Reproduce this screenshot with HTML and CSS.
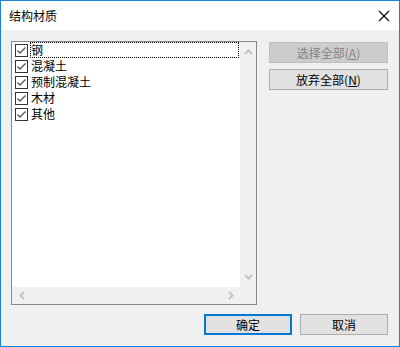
FILE: index.html
```html
<!DOCTYPE html>
<html>
<head>
<meta charset="utf-8">
<link rel="stylesheet" href="styles.css">
</head>
<body>
<div class="window">
  <div class="titlebar">
    <span class="title">结构材质</span>
    <svg class="close" width="12" height="12" viewBox="0 0 12 12"><path d="M1 1 L11 11 M11 1 L1 11" stroke="#000" stroke-width="1.1" fill="none"/></svg>
  </div>
  <div class="body">
    <div class="top">
      <div class="listbox">
        <div class="items">
          <div class="item focus"><span class="cb"><svg width="13" height="13" viewBox="0 0 13 13"><rect x="0.5" y="0.5" width="12" height="12" fill="#fff" stroke="#333"/><path d="M2.5 6.5 L5 9 L10.5 3.5" stroke="#555" stroke-width="1.3" fill="none"/></svg></span><span class="lbl">钢</span></div>
          <div class="item"><span class="cb"><svg width="13" height="13" viewBox="0 0 13 13"><rect x="0.5" y="0.5" width="12" height="12" fill="#fff" stroke="#333"/><path d="M2.5 6.5 L5 9 L10.5 3.5" stroke="#555" stroke-width="1.3" fill="none"/></svg></span><span class="lbl">混凝土</span></div>
          <div class="item"><span class="cb"><svg width="13" height="13" viewBox="0 0 13 13"><rect x="0.5" y="0.5" width="12" height="12" fill="#fff" stroke="#333"/><path d="M2.5 6.5 L5 9 L10.5 3.5" stroke="#555" stroke-width="1.3" fill="none"/></svg></span><span class="lbl">预制混凝土</span></div>
          <div class="item"><span class="cb"><svg width="13" height="13" viewBox="0 0 13 13"><rect x="0.5" y="0.5" width="12" height="12" fill="#fff" stroke="#333"/><path d="M2.5 6.5 L5 9 L10.5 3.5" stroke="#555" stroke-width="1.3" fill="none"/></svg></span><span class="lbl">木材</span></div>
          <div class="item"><span class="cb"><svg width="13" height="13" viewBox="0 0 13 13"><rect x="0.5" y="0.5" width="12" height="12" fill="#fff" stroke="#333"/><path d="M2.5 6.5 L5 9 L10.5 3.5" stroke="#555" stroke-width="1.3" fill="none"/></svg></span><span class="lbl">其他</span></div>
        </div>
        <div class="vscroll">
          <svg width="9" height="6" viewBox="0 0 9 6"><path d="M1 5 L4.5 1.5 L8 5" stroke="#c2c2c2" stroke-width="2" fill="none"/></svg>
          <svg width="9" height="6" viewBox="0 0 9 6"><path d="M1 1 L4.5 4.5 L8 1" stroke="#c2c2c2" stroke-width="2" fill="none"/></svg>
        </div>
        <div class="hscroll">
          <svg width="6" height="9" viewBox="0 0 6 9"><path d="M5 1 L1.5 4.5 L5 8" stroke="#c2c2c2" stroke-width="2" fill="none"/></svg>
          <svg width="6" height="9" viewBox="0 0 6 9"><path d="M1 1 L4.5 4.5 L1 8" stroke="#c2c2c2" stroke-width="2" fill="none"/></svg>
        </div>
        <div class="corner"></div>
      </div>
      <div class="side">
        <div class="btn disabled">选择全部(<u>A</u>)</div>
        <div class="btn">放弃全部(<u>N</u>)</div>
      </div>
    </div>
    <div class="bottom">
      <div class="btn default">确定</div>
      <div class="btn">取消</div>
    </div>
  </div>
</div>
</body>
</html>
```

FILE: styles.css
```css
* { box-sizing: border-box; }
html, body { margin: 0; padding: 0; }
body {
  width: 400px;
  height: 347px;
  font-family: "Noto Sans CJK SC", "Liberation Sans", sans-serif;
  font-size: 12px;
  color: #000;
}
.window {
  width: 400px;
  height: 347px;
  border: 1px solid #1883d7;
  display: flex;
  flex-direction: column;
  background: #f0f0f0;
}
.titlebar {
  height: 29px;
  background: #fff;
  display: flex;
  align-items: center;
  justify-content: space-between;
  padding: 0 9px 0 8px;
}
.title {
  font-size: 12px;
  line-height: 14px;
}
.close { display: block; }
.body {
  flex: 1;
  padding: 11px 11px 11px 10px;
  display: flex;
  flex-direction: column;
  gap: 9px;
}
.top {
  display: flex;
  gap: 12px;
  height: 264px;
}
.listbox {
  width: 246px;
  height: 264px;
  border: 1px solid #828790;
  background: #f0f0f0;
  display: grid;
  grid-template-columns: 228px 16px;
  grid-template-rows: 245px 17px;
}
.items {
  background: #fff;
  padding-top: 0;
}
.item {
  height: 16px;
  display: flex;
  align-items: center;
  padding-left: 3px;
}
.cb { width: 13px; height: 13px; display: block; margin-top: 0; }
.cb svg { display: block; }
.lbl {
  margin-left: 2px;
  height: 16px;
  line-height: 16px;
  padding-left: 1px;
  font-size: 12px;
}
.item.focus .lbl {
  flex: 1;
  margin-right: 1px;
  outline: 1px dotted #000;
  outline-offset: -1px;
}
.vscroll {
  display: flex;
  flex-direction: column;
  justify-content: space-between;
  align-items: center;
  padding: 7px 0 7px 0;
}
.vscroll svg, .hscroll svg { display: block; }
.hscroll {
  display: flex;
  justify-content: space-between;
  align-items: center;
  padding: 0 6px 0 7px;
}
.corner { background: #f0f0f0; }
.side {
  display: flex;
  flex-direction: column;
  gap: 6px;
  padding-top: 1px;
}
.btn {
  width: 119px;
  height: 21px;
  border: 1px solid #adadad;
  background: #e1e1e1;
  display: flex;
  align-items: center;
  justify-content: center;
  font-size: 12px;
  line-height: 14px;
}
.btn.disabled {
  border-color: #bfbfbf;
  background: #cccccc;
  color: #838383;
}
.bottom {
  display: flex;
  justify-content: flex-end;
  gap: 8px;
}
.bottom .btn { width: 88px; }
.btn.default {
  border: 2px solid #0078d7;
}
```
